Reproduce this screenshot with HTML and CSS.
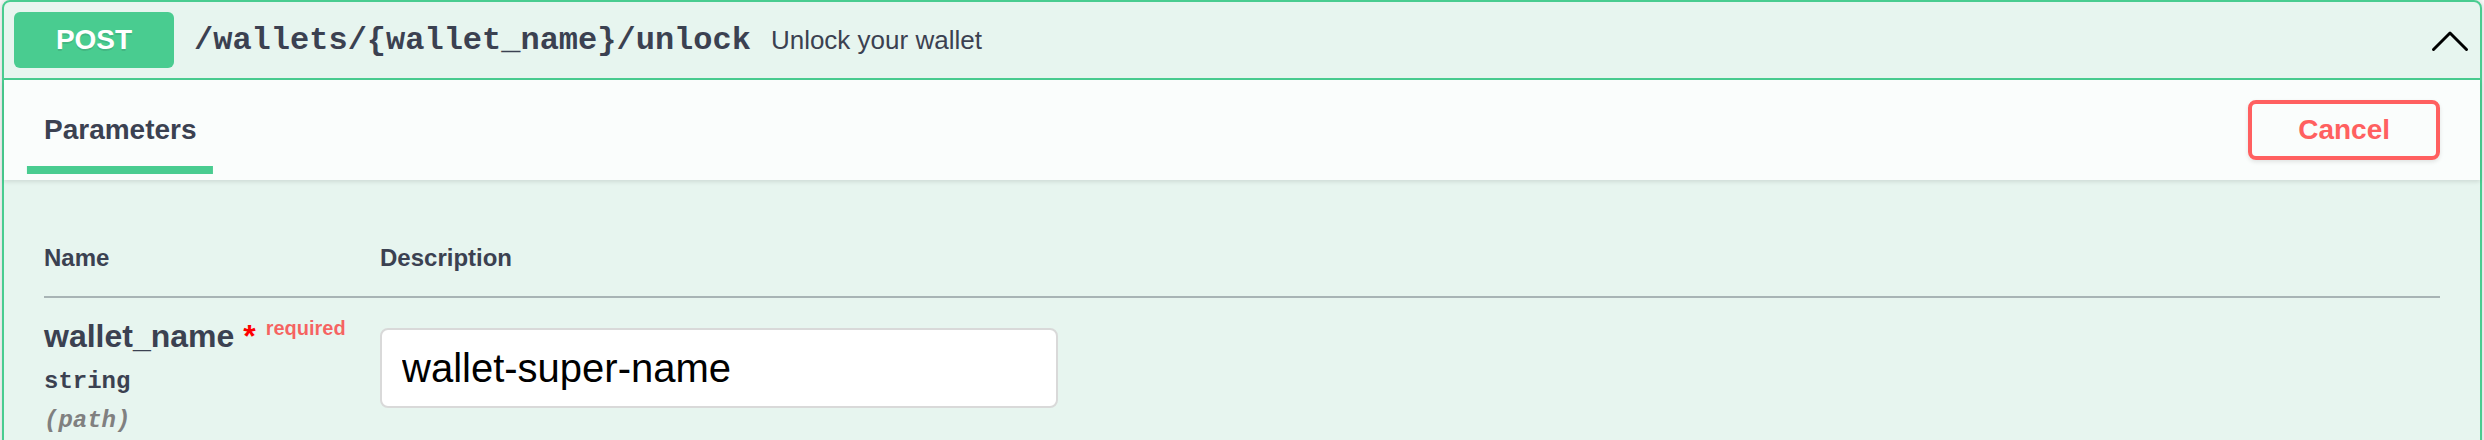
FILE: index.html
```html
<!DOCTYPE html>
<html lang="en">
<head>
<meta charset="utf-8">
<title>Unlock wallet</title>
<link rel="stylesheet" href="styles.css">
</head>
<body>
<div class="opblock">
  <div class="summary">
    <span class="method">POST</span>
    <span class="path">/wallets/{wallet_name}/unlock</span>
    <span class="desc">Unlock your wallet</span>
    <svg class="arrow" width="40" height="40" viewBox="0 0 40 40" aria-hidden="true">
      <polyline points="3.5,29.5 20,13 36.5,29.5" fill="none" stroke="#000" stroke-width="3" stroke-linecap="round" stroke-linejoin="round"/>
    </svg>
  </div>
  <div class="body">
    <div class="section-header">
      <div class="tab-header">
        <h4 class="tab-title"><span class="tab-label">Parameters</span></h4>
      </div>
      <button class="btn-cancel" type="button">Cancel</button>
    </div>
    <div class="table-container">
      <table class="parameters">
        <thead>
          <tr>
            <th class="col-name">Name</th>
            <th class="col-desc">Description</th>
          </tr>
        </thead>
        <tbody>
          <tr>
            <td class="cell-name">
              <div class="param-name">wallet_name<span class="star">&nbsp;*</span></div>
              <div class="param-type">string</div>
              <div class="param-in">(path)</div>
            </td>
            <td class="cell-desc">
              <input class="param-input" type="text" value="wallet-super-name">
            </td>
          </tr>
        </tbody>
      </table>
    </div>
  </div>
</div>
</body>
</html>
```
FILE: styles.css
```css
html, body {
  margin: 0;
  padding: 0;
  background: #fafafa;
}
body {
  padding: 0 2px 40px;
  font-family: "Liberation Sans", Arial, sans-serif;
  color: #3b4151;
}
.opblock {
  border: 2px solid #49cc90;
  border-radius: 8px;
  background: rgba(73, 204, 144, 0.1);
  box-shadow: 0 0 6px rgba(0, 0, 0, 0.19);
}
.summary {
  display: flex;
  align-items: center;
  padding: 10px;
  border-bottom: 2px solid #49cc90;
}
.method {
  min-width: 160px;
  padding: 12px 0;
  border-radius: 6px;
  background: #49cc90;
  color: #ffffff;
  font-family: "Liberation Sans", Arial, sans-serif;
  font-size: 28px;
  line-height: 32px;
  font-weight: 700;
  text-align: center;
  text-shadow: 0 2px 0 rgba(0, 0, 0, 0.1);
}
.path {
  padding: 0 20px;
  font-family: "Liberation Mono", "Courier New", monospace;
  font-size: 32px;
  font-weight: 700;
  color: #3b4151;
}
.desc {
  flex: 1 1 auto;
  font-size: 26px;
  color: #3b4151;
}
.arrow {
  flex: none;
  display: block;
}
.section-header {
  display: flex;
  align-items: center;
  min-height: 100px;
  box-sizing: border-box;
  padding: 16px 40px;
  background: rgba(255, 255, 255, 0.8);
  box-shadow: 0 2px 4px rgba(0, 0, 0, 0.1);
}
.tab-header {
  flex: 1;
}
.tab-title {
  margin: 0;
  font-size: 28px;
  line-height: 32px;
  font-weight: 700;
  color: #3b4151;
}
.tab-label {
  position: relative;
}
.tab-label::after {
  content: "";
  position: absolute;
  left: 50%;
  bottom: -29px;
  width: 122%;
  height: 8px;
  transform: translateX(-50%);
  background: #49cc90;
}
.btn-cancel {
  padding: 10px 46px;
  border: 4px solid #ff6060;
  border-radius: 8px;
  background: transparent;
  box-shadow: 0 2px 4px rgba(0, 0, 0, 0.1);
  color: #ff6060;
  font-family: "Liberation Sans", Arial, sans-serif;
  font-size: 28px;
  line-height: 32px;
  font-weight: 700;
}
.table-container {
  padding: 40px;
}
.parameters {
  width: 100%;
  border-collapse: collapse;
}
.parameters th {
  padding: 24px 0;
  font-size: 24px;
  line-height: 28px;
  font-weight: 700;
  text-align: left;
  color: #3b4151;
  border-bottom: 2px solid rgba(59, 65, 81, 0.2);
}
.col-name {
  width: 336px;
}
.parameters td {
  padding: 20px 0;
  vertical-align: top;
}
.param-name {
  font-size: 32px;
  font-weight: 700;
  color: #3b4151;
  line-height: 36px;
}
.star {
  color: #ff0000;
}
.param-name::after {
  content: "required";
  position: relative;
  top: -12px;
  padding: 10px;
  font-size: 20px;
  color: rgba(255, 0, 0, 0.6);
}
.param-type {
  padding: 10px 0;
  font-family: "Liberation Mono", "Courier New", monospace;
  font-size: 24px;
  font-weight: 700;
  color: #3b4151;
}
.param-in {
  padding-top: 2px;
  font-family: "Liberation Mono", "Courier New", monospace;
  font-size: 24px;
  font-style: italic;
  font-weight: 700;
  color: #808080;
}
.param-input {
  display: block;
  box-sizing: border-box;
  width: 678px;
  height: 80px;
  margin: 10px 0;
  padding: 16px 20px;
  border: 2px solid #d9d9d9;
  border-radius: 8px;
  background: #ffffff;
  font-family: "Liberation Sans", Arial, sans-serif;
  font-size: 40px;
  line-height: 44px;
  color: #000000;
  outline: none;
}
```
